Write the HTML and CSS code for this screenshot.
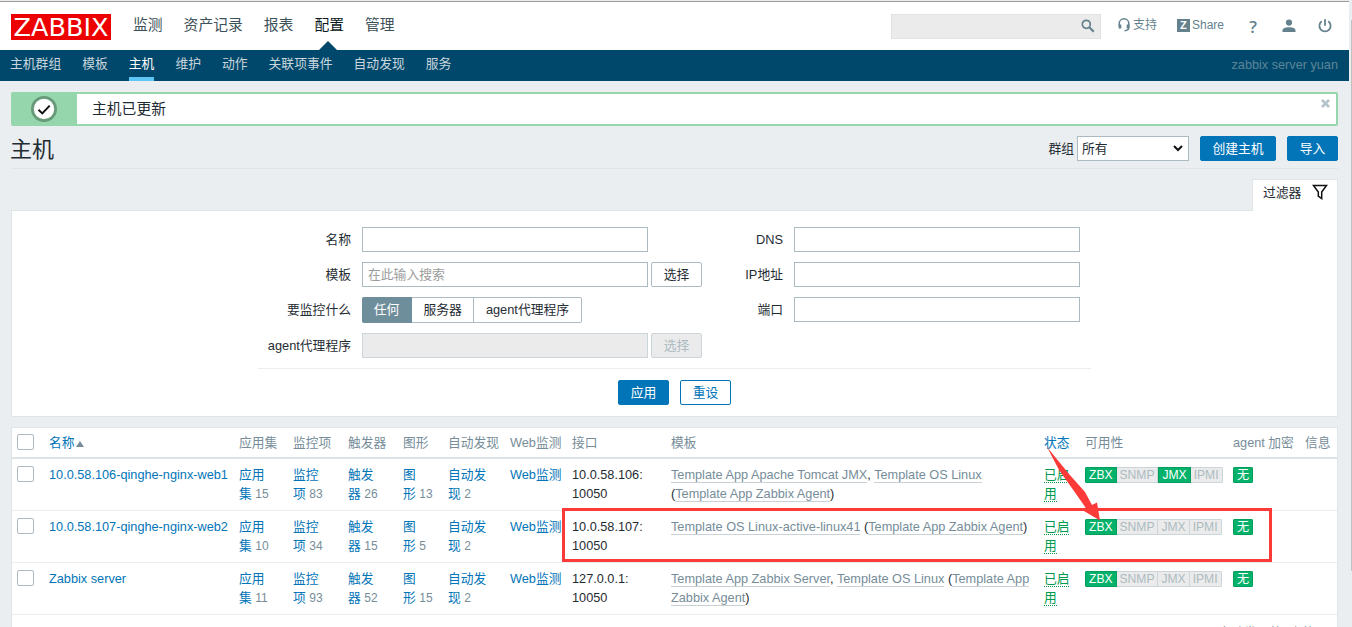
FILE: index.html
```html
<!DOCTYPE html>
<html lang="zh-CN">
<head>
    <meta charset="UTF-8">
    <meta name="viewport" content="width=device-width, initial-scale=1.0">
    <title>主机</title>
    <link rel="stylesheet" href="styles.css">
</head>
<body>
    <div class="page">
        <header class="top-nav">
            <a class="logo">ZABBIX</a>
            <nav class="main-menu">
                <a>监测</a>
                <a>资产记录</a>
                <a>报表</a>
                <a class="selected">配置</a>
                <a>管理</a>
            </nav>
            <div class="search">
                <svg width="14" height="14" viewBox="0 0 14 14" fill="none" stroke="#64818e"><circle cx="5.3" cy="5.3" r="4" stroke-width="1.7"/><path d="M8.3 8.3l4.5 4.5" stroke-width="2.2"/></svg>
            </div>
            <a class="top-link support">
                <svg width="12" height="14" viewBox="0 0 12 14" fill="none" stroke="#64818e" stroke-width="1.5"><path d="M1.2 8.500V5.600a4.800 4.800 0 0 1 9.600 0V9.500q0 3-4.300 3.200"/><path d="M2 6.500v4M10 6.500v4" stroke-width="2.600"/></svg>
                支持
            </a>
            <a class="top-link share">
                <span class="share-icon">Z</span>
                Share
            </a>
            <a class="top-icon help">?</a>
            <a class="top-icon">
                <svg width="14" height="14" viewBox="0 0 14 14" fill="#64818e"><circle cx="7" cy="3.6" r="3.1"/><path d="M.5 13V11.5C.5 9.4 3 8.2 7 8.2s6.5 1.2 6.5 3.3V13z"/></svg>
            </a>
            <a class="top-icon">
                <svg width="14" height="14" viewBox="0 0 14 14" fill="none" stroke="#64818e" stroke-width="1.8"><path d="M3.7 2.3a5.6 5.6 0 1 0 6.6 0M7 .3v6.4"/></svg>
            </a>
        </header>

        <nav class="sub-nav">
            <a>主机群组</a>
            <a>模板</a>
            <a class="selected">主机</a>
            <a>维护</a>
            <a>动作</a>
            <a>关联项事件</a>
            <a>自动发现</a>
            <a>服务</a>
            <span class="server-name">zabbix server yuan</span>
        </nav>

        <div class="msg-good">
            <div class="msg-icon">
                <svg width="26" height="26" viewBox="0 0 26 26"><circle cx="13" cy="13" r="11.6" fill="#fff" stroke="#679a78" stroke-width="2.8"/><path d="M7.5 13.8l3.8 3.6 7.4-7.8" fill="none" stroke="#111" stroke-width="2"/></svg>
            </div>
            <div class="msg-text">主机已更新</div>
            <svg class="msg-close" width="9" height="9" viewBox="0 0 9 9" stroke="#b5c4cb" stroke-width="2.6"><path d="M1 1l7 7M8 1L1 8"/></svg>
        </div>

        <div class="header-title">
            <h1>主机</h1>
            <label>群组</label>
            <div class="select">所有
                <svg width="10" height="7" viewBox="0 0 10 7" fill="none" stroke="#111" stroke-width="2"><path d="M1 1l4 4 4-4"/></svg>
            </div>
            <button class="btn create">创建主机</button>
            <button class="btn import">导入</button>
        </div>

        <div class="filter-tab-row">
            <div class="filter-tab">过滤器
                <svg width="16" height="16" viewBox="0 0 16 16" fill="none" stroke="#111" stroke-width="1.5"><path d="M1.5 1.5h13L9.7 8v6.5L6.3 12V8z"/></svg>
            </div>
        </div>

        <section class="filter">
            <div class="filter-columns">
                <div class="form-grid">
                    <label>名称</label>
                    <div class="field"><span class="input"></span></div>
                    <label>模板</label>
                    <div class="field"><span class="input placeholder">在此输入搜索</span><button class="btn grey">选择</button></div>
                    <label>要监控什么</label>
                    <div class="field radio">
                        <span class="checked">任何</span><span>服务器</span><span>agent代理程序</span>
                    </div>
                    <label>agent代理程序</label>
                    <div class="field"><span class="input disabled"></span><button class="btn grey disabled">选择</button></div>
                </div>
                <div class="form-grid right">
                    <label>DNS</label>
                    <div class="field"><span class="input"></span></div>
                    <label>IP地址</label>
                    <div class="field"><span class="input"></span></div>
                    <label>端口</label>
                    <div class="field"><span class="input"></span></div>
                </div>
            </div>
            <div class="filter-buttons">
                <button class="btn">应用</button>
                <button class="btn alt">重设</button>
            </div>
        </section>

        <div class="table-wrap">
            <table class="list-table">
                <colgroup>
                    <col class="c-check"><col class="c-name"><col class="c-apps"><col class="c-items"><col class="c-triggers"><col class="c-graphs"><col class="c-discovery"><col class="c-web"><col class="c-interface"><col class="c-templates"><col class="c-status"><col class="c-avail"><col class="c-enc"><col class="c-info">
                </colgroup>
                <thead>
                    <tr>
                        <th><span class="checkbox"></span></th>
                        <th><a>名称<span class="arrow-up"></span></a></th>
                        <th>应用集</th>
                        <th>监控项</th>
                        <th>触发器</th>
                        <th>图形</th>
                        <th>自动发现</th>
                        <th>Web监测</th>
                        <th>接口</th>
                        <th>模板</th>
                        <th><a>状态</a></th>
                        <th>可用性</th>
                        <th>agent 加密</th>
                        <th>信息</th>
                    </tr>
                </thead>
                <tbody>
                    <tr>
                        <td><span class="checkbox"></span></td>
                        <td><a>10.0.58.106-qinghe-nginx-web1</a></td>
                        <td><a>应用<br>集</a> <sup>15</sup></td>
                        <td><a>监控<br>项</a> <sup>83</sup></td>
                        <td><a>触发<br>器</a> <sup>26</sup></td>
                        <td><a>图<br>形</a> <sup>13</sup></td>
                        <td><a>自动发<br>现</a> <sup>2</sup></td>
                        <td><a>Web监测</a></td>
                        <td>10.0.58.106:<br>10050</td>
                        <td><a class="tpl">Template App Apache Tomcat JMX</a>, <a class="tpl">Template OS Linux</a><br>(<a class="tpl">Template App Zabbix Agent</a>)</td>
                        <td><a class="enabled">已启<br>用</a></td>
                        <td><div class="status"><span class="on">ZBX</span><span>SNMP</span><span class="on">JMX</span><span>IPMI</span></div></td>
                        <td><div class="status"><span class="on single">无</span></div></td>
                        <td></td>
                    </tr>
                    <tr>
                        <td><span class="checkbox"></span></td>
                        <td><a>10.0.58.107-qinghe-nginx-web2</a></td>
                        <td><a>应用<br>集</a> <sup>10</sup></td>
                        <td><a>监控<br>项</a> <sup>34</sup></td>
                        <td><a>触发<br>器</a> <sup>15</sup></td>
                        <td><a>图<br>形</a> <sup>5</sup></td>
                        <td><a>自动发<br>现</a> <sup>2</sup></td>
                        <td><a>Web监测</a></td>
                        <td>10.0.58.107:<br>10050</td>
                        <td><a class="tpl">Template OS Linux-active-linux41</a> (<a class="tpl">Template App Zabbix Agent</a>)</td>
                        <td><a class="enabled">已启<br>用</a></td>
                        <td><div class="status"><span class="on">ZBX</span><span>SNMP</span><span>JMX</span><span>IPMI</span></div></td>
                        <td><div class="status"><span class="on single">无</span></div></td>
                        <td></td>
                    </tr>
                    <tr>
                        <td><span class="checkbox"></span></td>
                        <td><a>Zabbix server</a></td>
                        <td><a>应用<br>集</a> <sup>11</sup></td>
                        <td><a>监控<br>项</a> <sup>93</sup></td>
                        <td><a>触发<br>器</a> <sup>52</sup></td>
                        <td><a>图<br>形</a> <sup>15</sup></td>
                        <td><a>自动发<br>现</a> <sup>2</sup></td>
                        <td><a>Web监测</a></td>
                        <td>127.0.0.1:<br>10050</td>
                        <td><a class="tpl">Template App Zabbix Server</a>, <a class="tpl">Template OS Linux</a> (<a class="tpl">Template App<br>Zabbix Agent</a>)</td>
                        <td><a class="enabled">已启<br>用</a></td>
                        <td><div class="status"><span class="on">ZBX</span><span>SNMP</span><span>JMX</span><span>IPMI</span></div></td>
                        <td><div class="status"><span class="on single">无</span></div></td>
                        <td></td>
                    </tr>
                </tbody>
            </table>
            <div class="table-stats">显示已自动发现的3中的3</div>
        </div>
    </div>

    <div class="scrollbar"></div>

    <!-- red marker around the second host -->
    <svg class="annotation" width="1352" height="627" viewBox="0 0 1352 627">
        <rect x="563.5" y="509.5" width="707" height="51" fill="none" stroke="#fc3b39" stroke-width="3"/>
        <path d="M1047 447L1069 474 1085 492 1092 505 1097 502.5 1100 520.5 1084 511 1085.500 507.500 1074 491 1059 470z" fill="#fc3b39"/>
    </svg>
</body>
</html>
```
FILE: styles.css
```css
* {
    box-sizing: border-box;
}
body {
    font-family: "Liberation Sans", "Noto Sans CJK SC", sans-serif;
    font-size: 12.8px;
    line-height: 19px;
    color: #1f2c33;
    background-color: #ebeef0;
    margin: 0;
    height: 627px;
    overflow: hidden;
    display: flex;
}
.page {
    width: 1349px;
    height: 627px;
    overflow: hidden;
    border-top: 1px solid #ebebeb;
}
.scrollbar {
    flex: 1;
    background-color: #c1c1c1;
    height: 551px;
    margin-top: 20px;
    margin-left: 2px;
}
.top-nav {
    height: 49px;
    background-color: #fff;
    border-top: 1px solid #9b9b9b;
    display: flex;
    align-items: center;
    padding: 0 17px 0 11px;
}
.logo {
    width: 100px;
    height: 26px;
    margin-top: 1px;
    background-color: #ed0000;
    color: #fff;
    font-family: "DejaVu Sans", sans-serif;
    font-size: 25.5px;
    line-height: 26px;
    text-align: center;
}
.main-menu {
    display: flex;
    flex: 1;
    gap: 21px;
    margin-left: 22px;
    align-self: stretch;
}
.main-menu a {
    position: relative;
    font-size: 14.8px;
    line-height: 46px;
    color: #3d515a;
}
.main-menu .selected {
    color: #0b1a22;
}
.main-menu .selected::after {
    content: "";
    position: absolute;
    left: 5px;
    bottom: 0;
    border: 9px solid transparent;
    border-top: 0;
    border-bottom: 9px solid #00486b;
}
.search {
    width: 210px;
    height: 25px;
    background-color: #ebebeb;
    border: 1px solid #e0e3e5;
    display: flex;
    align-items: center;
    justify-content: flex-end;
    padding-right: 5px;
}
.top-link {
    display: flex;
    align-items: center;
    margin-bottom: 2px;
    color: #64818e;
    font-size: 12px;
}
.support {
    gap: 3px;
    margin-left: 17px;
}
.share {
    gap: 2px;
    margin-left: 20px;
}
.share-icon {
    width: 13px;
    height: 13px;
    margin-top: 1px;
    background-color: #64818e;
    color: #fff;
    font-size: 11px;
    line-height: 13px;
    font-weight: bold;
    text-align: center;
}
.top-icon {
    display: flex;
    justify-content: center;
    width: 14px;
    margin-left: 22px;
    color: #64818e;
}
.help {
    font-family: "Open Sans", sans-serif;
    font-size: 17px;
    font-weight: 600;
}
.sub-nav {
    height: 31px;
    background-color: #00486b;
    display: flex;
    gap: 21px;
    padding: 0 11px 0 10px;
    line-height: 28px;
}
.sub-nav a {
    color: #c9d6dd;
}
.sub-nav .selected {
    color: #fff;
    border-bottom: 4px solid #5dc6f4;
}
.server-name {
    margin-left: auto;
    color: #5c8599;
    font-size: 12.7px;
    line-height: 31px;
}
.msg-good {
    display: flex;
    height: 34px;
    margin: 11px 11px 0;
    background-color: #fff;
    border: 2px solid #96d6ac;
    border-radius: 2px;
}
.msg-icon {
    width: 64px;
    padding: 2px 0 0 18px;
    background-color: #96d6ac;
}
.msg-text {
    flex: 1;
    font-size: 14.8px;
    line-height: 30px;
    padding-left: 15px;
}
.msg-close {
    margin: 5px 6px 0 0;
}
.header-title {
    display: flex;
    align-items: center;
    height: 43px;
    margin: 0 11px;
    padding-top: 3px;
    border-bottom: 1px solid #dfe4e7;
}
h1 {
    flex: 1;
    margin: 2px 0 0 -1px;
    font-size: 22px;
    font-weight: normal;
    line-height: 30px;
}
.select {
    display: flex;
    align-items: center;
    justify-content: space-between;
    width: 112px;
    height: 25px;
    margin-left: 3px;
    padding: 0 5px 0 4px;
    background-color: #fff;
    border: 1px solid #acbbc2;
}
.btn {
    width: 51px;
    height: 25px;
    padding: 0;
    font: inherit;
    line-height: 21px;
    color: #fff;
    background-color: #0275b8;
    border: 1px solid #0275b8;
    border-radius: 2px;
}
.create {
    width: 76px;
    margin-left: 11px;
}
.import {
    margin-left: 11px;
}
.filter-tab-row {
    display: flex;
    justify-content: flex-end;
    margin: 10px 11px 0;
}
.filter-tab {
    display: flex;
    align-items: center;
    gap: 11px;
    width: 86px;
    height: 32px;
    margin-bottom: -1px;
    padding: 0 0 7px 10px;
    background-color: #fff;
    border: 1px solid #dfe4e7;
    border-bottom: 0;
    z-index: 1;
}
.filter {
    height: 207px;
    margin: 0 11px;
    padding-top: 16px;
    background-color: #fff;
    border: 1px solid #dfe4e7;
}
.filter-columns {
    display: flex;
    width: 833px;
    height: 142px;
    margin: 0 auto;
    border-bottom: 1px solid #ebeef0;
}
.form-grid {
    display: grid;
    grid-template-columns: 93px 340px;
    grid-template-rows: 25px 25px 26px 25px;
    column-gap: 11px;
    row-gap: 10px;
}
.form-grid.right {
    grid-template-columns: 81px 286px;
}
.form-grid label {
    text-align: right;
    line-height: 25px;
}
.field {
    display: flex;
    gap: 3px;
}
.input {
    width: 286px;
    height: 25px;
    padding-left: 5px;
    line-height: 23px;
    border: 1px solid #acbbc2;
}
.placeholder {
    color: #9c9c9c;
}
.input.disabled {
    background-color: #ebebeb;
    border-color: #ccd5d9;
}
.btn.grey {
    color: #1f2c33;
    background-color: #fff;
    border-color: #acbbc2;
}
.btn.grey.disabled {
    background-color: #ebebeb;
    border-color: #ccd5d9;
    color: #acbbc2;
}
.radio {
    gap: 0;
}
.radio span {
    height: 26px;
    padding: 0 11.5px;
    line-height: 23px;
    border: 1px solid #acbbc2;
    border-left: 0;
}
.radio span:last-child {
    border-radius: 0 2px 2px 0;
}
.radio .checked {
    width: 50px;
    padding: 0;
    text-align: center;
    color: #fff;
    background-color: #6f8e9b;
    border-color: #6f8e9b;
    border-radius: 2px 0 0 2px;
}
.filter-buttons {
    display: flex;
    justify-content: center;
    gap: 11px;
    padding-top: 11px;
}
.btn.alt {
    color: #0275b8;
    background-color: #fff;
}
.table-wrap {
    height: 230px;
    margin: 10px 11px 0;
    background-color: #fff;
    border: 1px solid #dfe4e7;
}
.list-table {
    width: 1325px;
    table-layout: fixed;
    border-collapse: separate;
    border-spacing: 0;
    font-size: 12.72px;
}
.c-check { width: 32px; }
.c-name { width: 190px; }
.c-apps { width: 54px; }
.c-items { width: 55px; }
.c-triggers { width: 55px; }
.c-graphs { width: 45px; }
.c-discovery { width: 62px; }
.c-web { width: 62px; }
.c-interface { width: 99px; }
.c-templates { width: 373px; }
.c-status { width: 41px; }
.c-avail { width: 148px; }
.c-enc { width: 72px; }
.list-table th,
.list-table td {
    padding: 6px 0 0 5px;
    text-align: left;
    vertical-align: top;
    white-space: nowrap;
}
.list-table th {
    height: 31px;
    padding-top: 5px;
    font-weight: normal;
    color: #768d99;
    border-bottom: 2px solid #dce2e5;
}
.list-table td {
    height: 52px;
    border-bottom: 1px solid #ebeef0;
}
.list-table a {
    color: #0275b8;
}
.list-table a.tpl {
    color: #768d99;
    border-bottom: 1px solid #c8d1d6;
}
.list-table a.enabled {
    color: #009a4d;
    border-bottom: 1px dotted #009a4d;
}
.list-table sup {
    font-size: 12px;
    line-height: 1;
    vertical-align: baseline;
    color: #768d99;
}
.checkbox {
    display: block;
    width: 17px;
    height: 16px;
    margin-top: 1px;
    border: 1px solid #acbbc2;
    border-radius: 2px;
}
.arrow-up {
    display: inline-block;
    margin-left: 2px;
    border: 4px solid transparent;
    border-top: 0;
    border-bottom: 6px solid #768d99;
}
.status {
    display: inline-flex;
    margin-top: 2px;
    border-radius: 2px;
    overflow: hidden;
}
.status span {
    height: 16px;
    padding: 0 3px;
    font-size: 12.1px;
    line-height: 14px;
    color: #acbbc2;
    background-color: #ebebeb;
    border: 1px solid #ccd5d9;
    border-left: 0;
}
.status .on {
    color: #fff;
    background-color: #06b26b;
    border: 1px solid #009f5b;
}
.table-stats {
    padding: 8px 15px 0;
    text-align: right;
    color: #768d99;
}
.annotation {
    position: absolute;
    left: 0;
    top: 0;
}
```
